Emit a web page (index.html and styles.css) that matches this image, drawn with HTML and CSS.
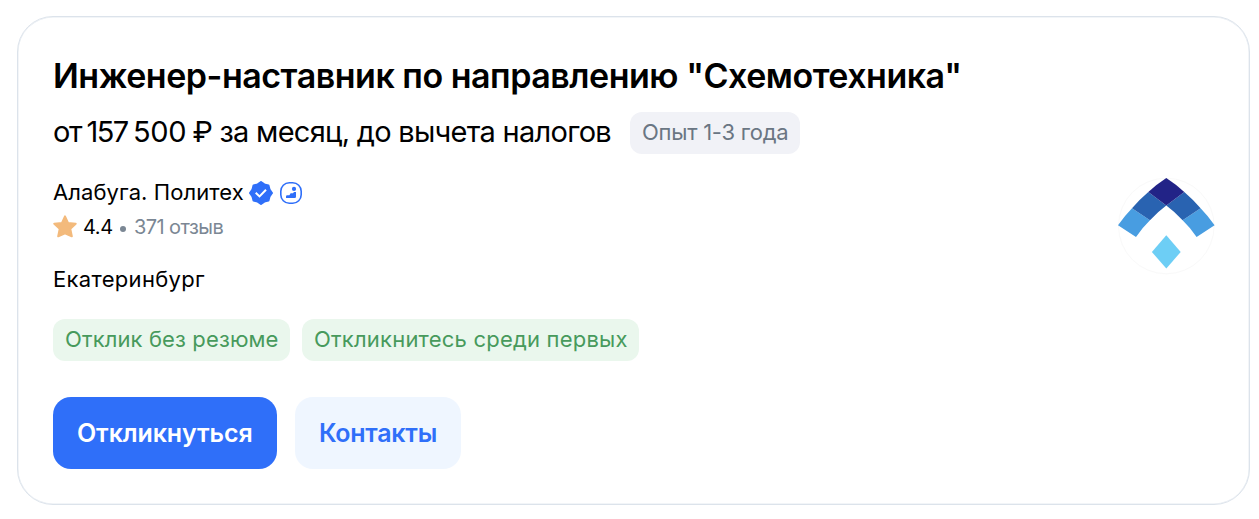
FILE: index.html
```html
<!DOCTYPE html>
<html lang="ru">
<head>
    <meta charset="UTF-8">
    <meta name="viewport" content="width=device-width, initial-scale=1.0">
    <title>Инженер-наставник по направлению "Схемотехника"</title>
    <link rel="stylesheet" href="styles.css">
</head>
<body>

    <div class="card">
        <h2 class="title">Инженер-наставник по направлению "Схемотехника"</h2>

        <div class="salary-row">
            <span class="salary"><span class="from">от</span><span class="amount">157</span><span class="amount">500</span><span class="period">₽ за месяц, до вычета налогов</span></span>
            <span class="tag experience">Опыт 1-3 года</span>
        </div>

        <div class="middle">
            <div class="info">
                <!-- Company name with badges -->
                <div class="company">
                    <span class="company-name">Алабуга. Политех</span>
                    <svg class="badge-verified" viewBox="0 0 24 24">
                        <path fill="#2f6ff9" stroke="#2f6ff9" stroke-width="2" stroke-linejoin="round" d="M12 1 L15.3 3.4 L19.5 4.5 L20.6 8.7 L23 12 L20.6 15.3 L19.5 19.5 L15.3 20.6 L12 23 L8.7 20.6 L4.5 19.5 L3.4 15.3 L1 12 L3.4 8.7 L4.5 4.5 L8.7 3.4 Z"/>
                        <path fill="none" stroke="#fff" stroke-width="2" d="M6.7 11.8 L10.5 15.4 L17 8.7"/>
                    </svg>
                    <svg class="badge-it" viewBox="0 0 22 22">
                        <rect x="0.8" y="0.8" width="20.4" height="20.4" rx="8.5" fill="none" stroke="#2f6ff9" stroke-width="1.6"/>
                        <circle cx="14" cy="6.9" r="2.1" fill="#2f6ff9"/>
                        <path fill="#2f6ff9" d="M6 16 V14.4 Q6 13.2 7.2 13.2 H9.4 L10.6 11.2 H13 L14 10 H16 V14.8 Q16 16 14.8 16 Z"/>
                    </svg>
                </div>

                <div class="rating">
                    <svg class="star" viewBox="0 0 24 24">
                        <path fill="#f3ba7c" stroke="#f3ba7c" stroke-width="2" stroke-linejoin="round" d="M12 1.4 L15 7.9 L22.7 8.7 L17.3 13.9 L18.8 21.3 L12 18.3 L5.2 21.3 L6.7 13.9 L1.3 8.7 L9 7.9 Z"/>
                    </svg>
                    <span class="score">4.4</span>
                    <span class="dot"></span>
                    <span class="reviews">371 отзыв</span>
                </div>

                <div class="city">Екатеринбург</div>
            </div>

            <!-- Company logo -->
            <svg class="logo" viewBox="0 0 97 97">
                <circle cx="48.3" cy="48" r="47.8" fill="#fff" stroke="#f9f9f9" stroke-width="1"/>
                <path fill="#489de1" d="M0 47.3 Q6.5 38 14 30.3 L32 42.3 Q24.5 49.5 18 59 Z"/>
                <path fill="#2963b1" d="M14 30.3 Q21.5 21.5 30.3 14 L48.3 27.5 Q39.5 34 32 42.3 Z"/>
                <path fill="#489de1" d="M96.6 47.3 Q90.1 38 82.6 30.3 L64.6 42.3 Q72.1 49.5 78.6 59 Z"/>
                <path fill="#2963b1" d="M82.6 30.3 Q75.1 21.5 66.3 14 L48.3 27.5 Q57.1 34 64.6 42.3 Z"/>
                <path fill="#222387" d="M30.3 14 Q39 6 48.3 0 Q57.6 6 66.3 14 L48.3 27.5 Z"/>
                <path fill="#6dcef5" d="M48.3 57.3 L62.7 74 L48.3 90.5 L33.9 74 Z"/>
            </svg>
        </div>

        <div class="tags">
            <span class="tag green no-resume">Отклик без резюме</span>
            <span class="tag green be-first">Откликнитесь среди первых</span>
        </div>

        <div class="actions">
            <button class="btn btn-primary">Откликнуться</button>
            <button class="btn btn-secondary">Контакты</button>
        </div>
    </div>

</body>
</html>
```
FILE: styles.css
```css
* {
    box-sizing: border-box;
}

body {
    margin: 0;
    padding: 16px 9px 0 17px;
    background: #fff;
    color: #000;
    font-family: Inter, "Liberation Sans", sans-serif;
    overflow: hidden;
}

.card {
    height: 489px;
    padding: 35px 34px 0 35px;
    border: 1px solid #dce3eb;
    border-radius: 36px;
    box-shadow: inset 0 0 0 0.5px #e6ebf1;
}

.title {
    margin: 0;
    font-size: 34px;
    line-height: 48px;
    font-weight: 600;
    letter-spacing: -0.48px;
    white-space: nowrap;
}

/* Salary and experience */
.salary-row {
    display: flex;
    align-items: center;
    gap: 19px;
    height: 42px;
    margin-top: 12px;
}

.salary {
    display: flex;
    width: 558px;
    padding-bottom: 3px;
    font-size: 29px;
    line-height: 38px;
    letter-spacing: -0.72px;
    white-space: nowrap;
}

.from {
    width: 34px;
    letter-spacing: -1.5px;
}

.amount {
    width: 47px;
    letter-spacing: -1.7px;
}

.amount + .amount {
    width: 60px;
    letter-spacing: -0.4px;
}

.tag {
    height: 42px;
    padding: 0 12px;
    border-radius: 12px;
    font-size: 22px;
    line-height: 41px;
    white-space: nowrap;
}

.experience {
    width: 170px;
    background: #f1f2f7;
    color: #6a7683;
    letter-spacing: -0.25px;
}

.middle {
    display: flex;
    justify-content: space-between;
    height: 142px;
    margin-top: 23px;
}

.company {
    display: flex;
    align-items: center;
    height: 32px;
}

.company-name {
    width: 196px;
    padding-bottom: 2px;
    font-size: 22px;
    letter-spacing: 0.08px;
    white-space: nowrap;
}

.badge-verified {
    width: 24px;
    height: 24px;
}

.badge-it {
    width: 22px;
    height: 22px;
    margin-left: 7px;
}

.rating {
    display: flex;
    align-items: center;
    height: 36px;
    font-size: 20px;
}

.star {
    width: 24px;
    height: 24px;
}

.score {
    width: 31px;
    margin-left: 6px;
    letter-spacing: -0.4px;
}

.dot {
    width: 6px;
    height: 6px;
    margin: 3px 8px 0 6px;
    border-radius: 50%;
    background: #7b8794;
}

.reviews {
    color: #7b8794;
    letter-spacing: -0.58px;
}

.city {
    margin-top: 18px;
    font-size: 22px;
    line-height: 32px;
    letter-spacing: 0.32px;
}

.logo {
    width: 97px;
    height: 97px;
    margin-top: 1px;
}

/* Green labels */
.tags {
    display: flex;
    gap: 12px;
}

.green {
    background: #eaf7ed;
    color: #479a5c;
}

.no-resume {
    width: 237px;
    letter-spacing: 0.12px;
}

.be-first {
    width: 337px;
    letter-spacing: 0.21px;
}

.actions {
    display: flex;
    gap: 18px;
    margin-top: 36px;
}

.btn {
    height: 72px;
    padding: 0 24px;
    border: none;
    border-radius: 18px;
    font-family: inherit;
    font-size: 25px;
    font-weight: 600;
    text-align: left;
    white-space: nowrap;
}

.btn-primary {
    width: 224px;
    background: #2f6ff9;
    color: #fff;
    letter-spacing: -0.1px;
}

.btn-secondary {
    width: 166px;
    background: #eff6ff;
    color: #2f6ff9;
    letter-spacing: -0.25px;
}
```
